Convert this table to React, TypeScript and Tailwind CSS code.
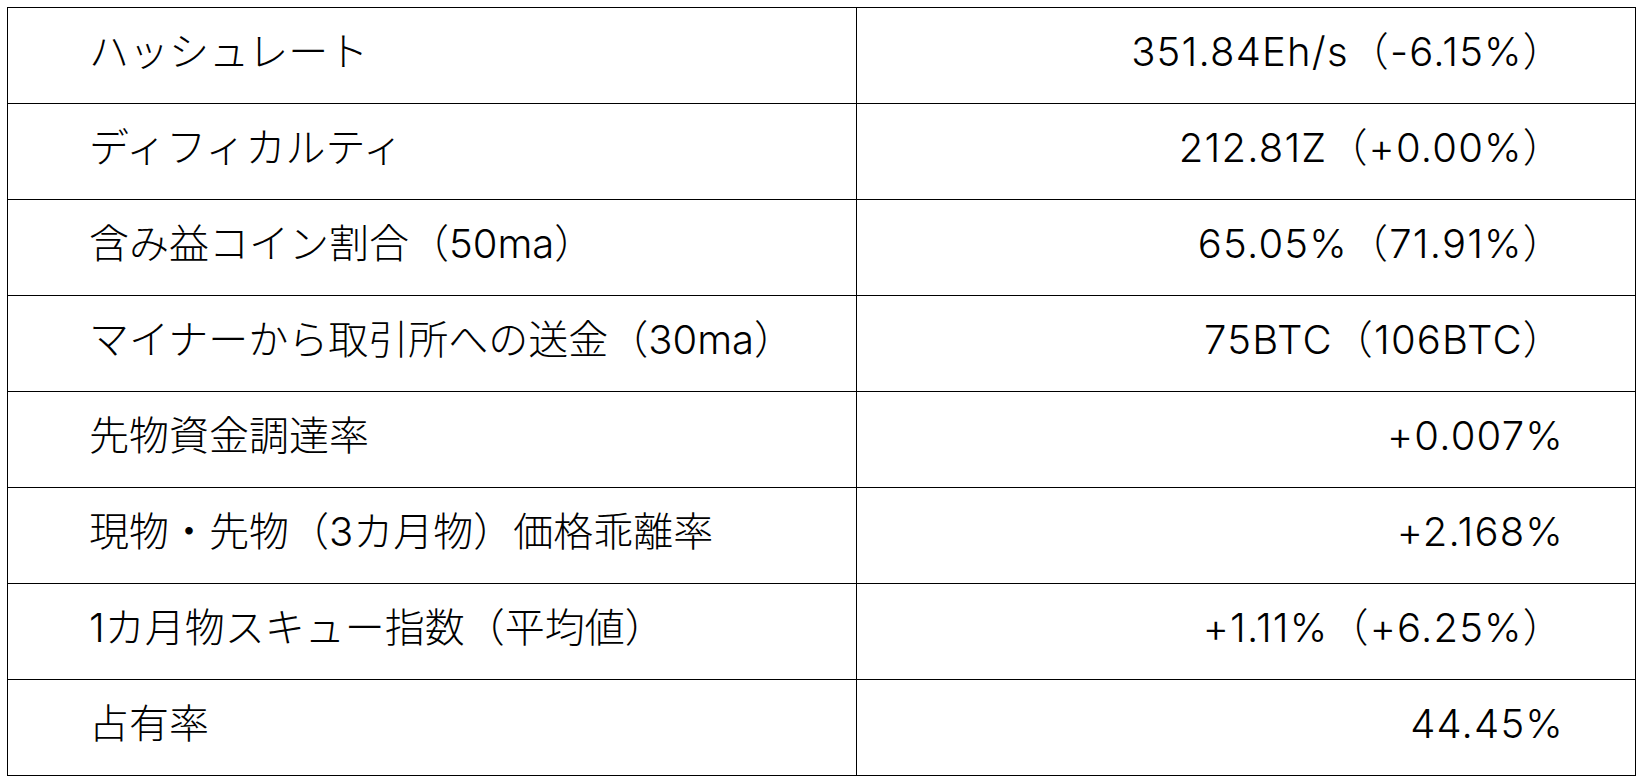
const rows: [string, string][] = [
  ['ハッシュレート', '351.84Eh/s（-6.15%）'],
  ['ディフィカルティ', '212.81Z（+0.00%）'],
  ['含み益コイン割合（50ma）', '65.05%（71.91%）'],
  ['マイナーから取引所への送金（30ma）', '75BTC（106BTC）'],
  ['先物資金調達率', '+0.007%'],
  ['現物・先物（3カ月物）価格乖離率', '+2.168%'],
  ['1カ月物スキュー指数（平均値）', '+1.11%（+6.25%）'],
  ['占有率', '44.45%'],
];

export default function App() {
  return (
    <div className="min-h-screen bg-white p-[7px] font-light text-black font-['Inter','Noto_Sans_CJK_JP',sans-serif]">
      <div className="grid w-[1629px] grid-cols-[849px_779px] border-l border-t border-black">
        {rows.map(([label, value]) => (
          <div key={label} className="contents">
            <div className="flex h-[96px] items-center border-b border-r border-black pb-[8px] pl-[81px] text-[40px]">
              {label}
            </div>
            <div className="flex h-[96px] items-center justify-end border-b border-r border-black pb-[8px] pr-[71px] text-[40px] tracking-[0.03em]">
              {value}
            </div>
          </div>
        ))}
      </div>
    </div>
  );
}
